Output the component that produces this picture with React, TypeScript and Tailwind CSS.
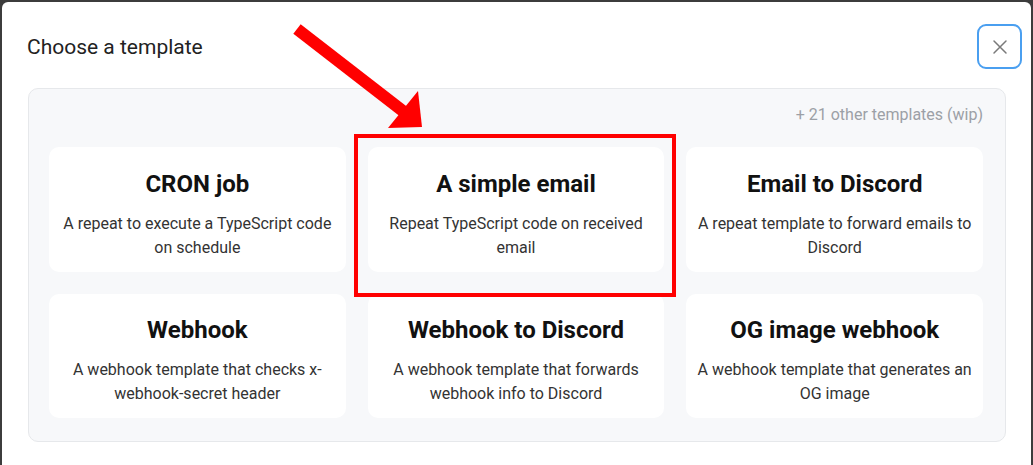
import React from "react";

const templates = [
  { title: "CRON job", desc: "A repeat to execute a TypeScript code on schedule" },
  { title: "A simple email", desc: "Repeat TypeScript code on received email" },
  { title: "Email to Discord", desc: "A repeat template to forward emails to Discord" },
  { title: "Webhook", desc: "A webhook template that checks x-webhook-secret header" },
  { title: "Webhook to Discord", desc: "A webhook template that forwards webhook info to Discord" },
  { title: "OG image webhook", desc: "A webhook template that generates an OG image" },
];

export default function App() {
  return (
    <div
      className="relative w-[1033px] h-[465px] overflow-hidden bg-[#3c3c3c] pt-[2px] pl-[2px]"
      style={{ fontFamily: "Roboto, 'Liberation Sans', sans-serif" }}
    >
      <div className="w-[1029px] h-[463px] bg-white rounded-tl-[6px] rounded-tr-[6px]">
        <div className="flex items-center justify-between pl-[25px] pr-[9px] pt-[22px]">
          <h1 className="text-[21px] leading-[28px] text-[#222] font-normal">Choose a template</h1>
          <button className="w-[45px] h-[45px] rounded-[9px] border-2 border-[#4a9ff0] flex items-center justify-center bg-white">
            <svg width="16" height="16" viewBox="0 0 16 16" fill="none" stroke="#7a7a7a" strokeWidth="1.5" strokeLinecap="round">
              <path d="M2 2 L14 14 M14 2 L2 14" />
            </svg>
          </button>
        </div>
        <div className="mt-[19px] ml-[26px] w-[978px] rounded-[10px] border border-[#e6e8eb] bg-[#f7f8fa] pl-[20px] pr-[22px] pt-[16px] pb-[23px]">
          <div className="text-right text-[16px] leading-[20px] text-[#9ca0a6]">+ 21 other templates (wip)</div>
          <div className="mt-[22px] grid grid-cols-3 gap-x-[22px] gap-y-[22px]">
            {templates.map((t, i) => (
              <div
                key={t.title}
                className={`bg-white rounded-[10px] px-[11px] text-center ${i < 3 ? "h-[125px] pt-[22px]" : "h-[124px] pt-[21px]"}`}
              >
                <div className="text-[24px] leading-[30px] font-bold text-[#111]">{t.title}</div>
                <div className="mt-[13px] text-[16px] leading-[24px] text-[#333]">{t.desc}</div>
              </div>
            ))}
          </div>
        </div>
      </div>
      <div className="absolute left-[354px] top-[134px] w-[322px] h-[163px] border-[4px] border-[#ff0000]" />
      <svg className="absolute left-0 top-0" width="1033" height="465" viewBox="0 0 1033 465">
        <line x1="297" y1="29" x2="408" y2="115" stroke="#ff0000" strokeWidth="12" />
        <polygon points="418,91 422,127 388,128" fill="#ff0000" />
      </svg>
    </div>
  );
}
